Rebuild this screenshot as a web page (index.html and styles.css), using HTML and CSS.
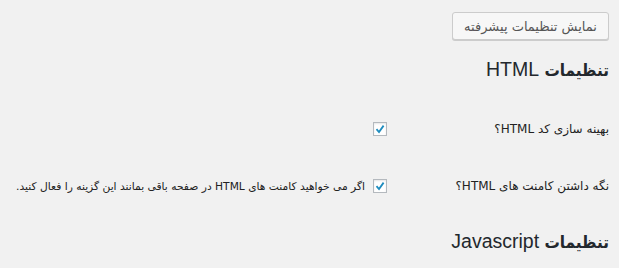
FILE: index.html
```html
<!DOCTYPE html>
<html lang="fa" dir="rtl">
<head>
<meta charset="utf-8">
<link rel="stylesheet" href="styles.css">
</head>
<body>
<div class="wrap">
  <div class="top"><button class="btn">نمایش تنظیمات پیشرفته</button></div>
  <h2 class="title"><span class="fa">تنظیمات</span> HTML</h2>
  <div class="row row1">
    <div class="label">بهینه سازی کد HTML؟</div>
    <div class="field"><span class="cb"><svg viewBox="0 0 12 12" width="12" height="12"><path d="M2.5 6.2 L5 9 L9.6 2.6" fill="none" stroke="#1e8cbe" stroke-width="1.8"/></svg></span></div>
  </div>
  <div class="row row2">
    <div class="label">نگه داشتن کامنت های HTML؟</div>
    <div class="field"><span class="cb"><svg viewBox="0 0 12 12" width="12" height="12"><path d="M2.5 6.2 L5 9 L9.6 2.6" fill="none" stroke="#1e8cbe" stroke-width="1.8"/></svg></span><span class="desc">اگر می خواهید کامنت های HTML در صفحه باقی بمانند این گزینه را فعال کنید.</span></div>
  </div>
  <h2 class="title title2"><span class="fa">تنظیمات</span> Javascript</h2>
</div>
</body>
</html>
```
FILE: styles.css
```css
html, body { margin: 0; padding: 0; }
body {
  background: #f1f1f1;
  color: #222;
  font-family: "DejaVu Sans", "Liberation Sans", sans-serif;
  width: 619px;
  height: 268px;
  overflow: hidden;
}
.wrap { padding-right: 10px; }
.top { padding-top: 12px; display: flex; }
.btn {
  font-family: "DejaVu Sans", sans-serif;
  font-size: 13px;
  color: #555;
  background: #f7f7f7;
  border: 1px solid #ccc;
  border-radius: 3px;
  box-shadow: 0 1px 0 #ccc;
  height: 28px;
  width: 157px;
  padding: 0 6px;
  margin: 0;
  direction: rtl;
  white-space: nowrap;
}
.title {
  font-family: "Liberation Sans", "DejaVu Sans", sans-serif;
  font-weight: normal;
  font-size: 19.5px;
  color: #23282d;
  margin: 13px 0 0 0;
  line-height: 32px;
}
.fa {
  font-family: "DejaVu Sans Condensed", "DejaVu Sans", sans-serif;
  font-stretch: condensed;
  font-size: 17px;
  font-weight: bold;
}
.row { display: flex; align-items: center; }
.row1 { margin-top: 34px; height: 18px; }
.row2 { margin-top: 39px; height: 18px; }
.label {
  width: 222px;
  font-size: 12px;
  color: #222;
}
.field { display: flex; align-items: center; gap: 8px; }
.cb {
  width: 12px; height: 12px;
  border: 1px solid #b4b9be;
  background: #fff;
  box-shadow: inset 0 1px 2px rgba(0,0,0,.1);
  display: flex; align-items: center; justify-content: center;
}
.desc { font-size: 10.7px; color: #222; }
.title2 { margin-top: 30px; }
```
